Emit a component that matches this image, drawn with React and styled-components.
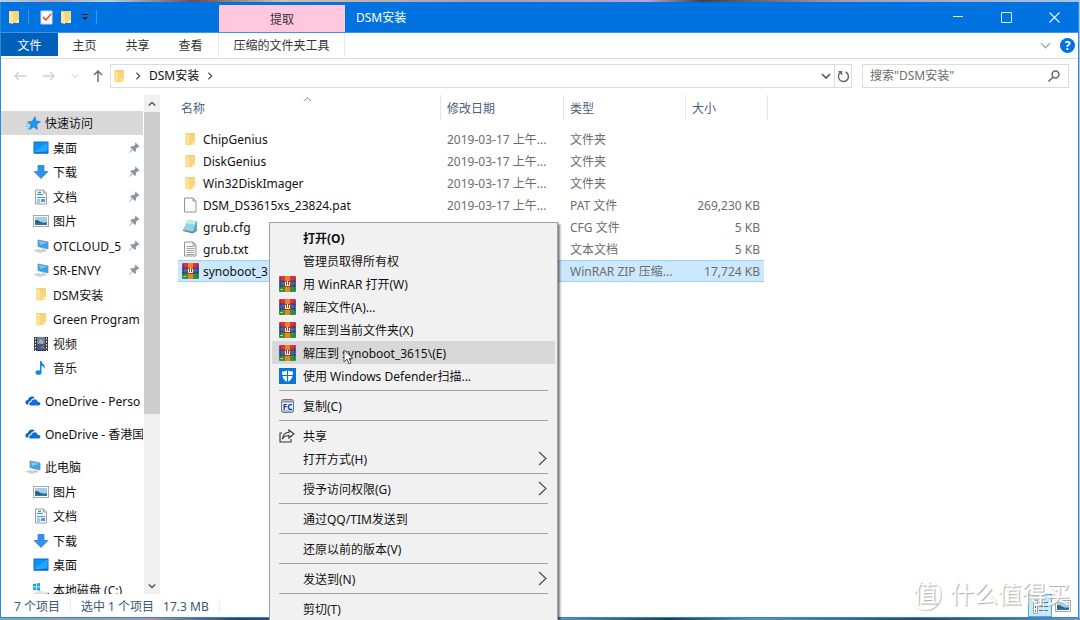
import styled, { createGlobalStyle, css } from 'styled-components';

const colors = {
    accent: '#0073e0',
    accentDark: '#005fb8',
    frame: '#2a8bd4',
    line: '#dcdcdc',
    muted: '#6d6d6d',
    heading: '#4c607a',
    selection: '#cce8ff',
    selectionBorder: '#99d1ff',
};

const GlobalStyle = createGlobalStyle`
    * {
        box-sizing: border-box;
    }

    body {
        margin: 0;
        font-family: 'Noto Sans', 'Noto Sans CJK SC', sans-serif;
        font-size: 12px;
        line-height: 20px;
        color: #111;
    }

    button, input {
        font: inherit;
        color: inherit;
        border: none;
        background: none;
        padding: 0;
        margin: 0;
    }
`;

const Desktop = styled.div`
    position: relative;
    display: flex;
    height: 100vh;
    padding: 2px 1px 2px 0;
    overflow: hidden;
    background:
        linear-gradient(90deg, #7fa3c4 0%, #a893a8 14%, #24436c 22%, #6f9cc6 50%, #1d3a5e 62%, #5f90bd 70%, #27466d 85%, #6f95b8 100%) bottom / 100% 2px no-repeat,
        linear-gradient(90deg, #b5d3e6 0%, #b5a8b4 5%, #b5d3e6 10%, #6f4a58 18%, #cfbfa8 26%, #a79cb8 45%, #b4a6d0 60%, #44404e 65%, #a79ab4 78%, #a9c4e4 100%);
`;

const Window = styled.div`
    flex: 1;
    min-width: 0;
    display: flex;
    flex-direction: column;
    border: solid ${colors.frame};
    border-width: 0 1px 1px;
    background: #fff;
`;

const TitleBar = styled.header`
    display: flex;
    height: 31px;
    flex-shrink: 0;
    background: ${colors.accent};
    border-bottom: 1px solid #3d93e4;
    color: #fff;
`;

const QuickAccess = styled.div`
    display: flex;
    align-items: center;
    gap: 6px;
    width: 218px;
    padding-left: 6px;
`;

const Divider = styled.span`
    width: 1px;
    height: 14px;
    margin-right: 5px;
    background: #3f95e8;
`;

const IconButton = styled.button`
    display: flex;
    align-items: center;
    justify-content: center;
    flex-shrink: 0;
    width: ${(props) => props.$width || 'auto'};
`;

const ContextTab = styled.div`
    width: 126px;
    margin-top: 3px;
    padding-top: 5px;
    text-align: center;
    color: #333;
    background: #ffc8df;
`;

const Title = styled.h1`
    flex: 1;
    margin: 0;
    padding: 6px 11px;
    font-size: 12px;
    line-height: 20px;
    font-weight: 400;
`;

const Ribbon = styled.nav`
    display: flex;
    align-items: flex-start;
    height: 26px;
    flex-shrink: 0;
    border-bottom: 1px solid ${colors.line};
    color: #333;
`;

const RibbonTab = styled.button`
    width: 53px;
    height: 24px;
    padding-top: 2px;

    ${(props) => props.$file && css`
        width: 57px;
        height: 23px;
        background: ${colors.accentDark};
        color: #fff;
    `}

    ${(props) => props.$context && css`
        width: 127px;
        margin-left: 1px;
        border: solid #e6e6e6;
        border-width: 0 1px;
    `}
`;

const RibbonEnd = styled.div`
    display: flex;
    align-items: center;
    gap: 9px;
    height: 24px;
    margin-left: auto;
    padding-right: 3px;
`;

const Help = styled.button`
    width: 15px;
    height: 15px;
    border-radius: 50%;
    background: ${colors.accent};
    color: #fff;
    font-weight: 700;
    line-height: 15px;
`;

const AddressRow = styled.div`
    display: flex;
    align-items: center;
    height: 36px;
    flex-shrink: 0;
    padding: 0 9px 2px 12px;
`;

const NavButtons = styled.div`
    display: flex;
    align-items: center;
    gap: 12px;
    width: 97px;
`;

const AddressBar = styled.div`
    display: flex;
    flex: 1;
    height: 24px;
    border: 1px solid ${colors.line};
`;

const Crumbs = styled.div`
    display: flex;
    align-items: center;
    flex: 1;
    gap: 7px;
    padding-left: 1px;
`;

const RefreshButton = styled(IconButton)`
    border-left: 1px solid ${colors.line};
`;

const SearchBox = styled.label`
    display: flex;
    align-items: center;
    width: 207px;
    height: 24px;
    margin-left: 10px;
    padding: 0 8px 0 7px;
    border: 1px solid ${colors.line};
`;

const SearchInput = styled.input`
    flex: 1;
    min-width: 0;
    outline: none;

    &::placeholder {
        color: ${colors.muted};
        opacity: 1;
    }
`;

const Main = styled.main`
    display: flex;
    flex: 1;
    min-height: 0;
`;

const Label = styled.span`
    display: block;
    padding-top: 2px;
`;

const Sidebar = styled.aside`
    width: 142px;
    flex-shrink: 0;
    padding-top: 16px;
    overflow: hidden;
`;

const TreeGroup = styled.ul`
    list-style: none;
    margin: 0 0 9px;
    padding: 0;
`;

const TreeItem = styled.li`
    display: flex;
    align-items: center;
    gap: 4px;
    height: 24px;
    padding-left: ${(props) => (props.$root ? '24px' : '32px')};
    padding-right: ${(props) => (props.$pinned ? '3px' : '0')};
    background: ${(props) => (props.$active ? '#d9d9d9' : 'none')};
    white-space: nowrap;

    &:nth-child(even) {
        height: 25px;
    }
`;

const TreeLabel = styled(Label)`
    flex: 1;
`;

const ScrollBar = styled.div`
    display: flex;
    flex-direction: column;
    width: 16px;
    margin-left: 1px;
    background: #f0f0f0;
`;

const ScrollButton = styled(IconButton)`
    height: 17px;
`;

const ScrollTrack = styled.div`
    flex: 1;
`;

const ScrollThumb = styled.div`
    height: 65%;
    background: #cdcdcd;
`;

const Files = styled.section`
    flex: 1;
    padding-left: 18px;
    overflow: hidden;
`;

const FileTable = styled.table`
    width: 590px;
    table-layout: fixed;
    border-collapse: separate;
    border-spacing: 0;
`;

const Column = styled.col`
    width: ${(props) => props.$width};
`;

const HeadCell = styled.th`
    position: relative;
    height: 25px;
    padding: 2px 0 0 ${(props) => (props.$first ? '3px' : '6px')};
    border-right: 1px solid #e5e5e5;
    font-weight: 400;
    text-align: left;
    color: ${colors.heading};
`;

const SortMark = styled.span`
    position: absolute;
    top: 0;
    left: calc(50% - 6px);
    display: flex;
`;

const Spacer = styled.tr`
    height: 8px;
`;

const Cell = styled.td`
    height: 22px;
    padding: 0 4px 0 6px;
    white-space: nowrap;
    text-align: ${(props) => (props.$right ? 'right' : 'left')};
    color: ${(props) => (props.$name ? 'inherit' : colors.muted)};
`;

const FileRow = styled.tr`
    ${(props) => props.$selected && css`
        ${Cell} {
            background: ${colors.selection};
            box-shadow: inset 0 1px ${colors.selectionBorder}, inset 0 -1px ${colors.selectionBorder};
        }
    `}
`;

const FileName = styled.div`
    display: flex;
    align-items: center;
    gap: 4px;
    margin-left: -2px;
`;

const StatusBar = styled.footer`
    display: flex;
    align-items: center;
    height: 23px;
    flex-shrink: 0;
    padding: 0 7px 0 13px;
    color: #3b5672;
`;

const StatusText = styled(Label)`
    margin-right: 9px;
`;

const StatusLine = styled.span`
    width: 1px;
    height: 14px;
    margin: 0 10px 0 1px;
    background: #ececec;
`;

const ViewButtons = styled.div`
    display: flex;
    align-items: center;
    gap: 3px;
    height: 23px;
    margin-left: auto;
`;

const ViewButton = styled(IconButton)`
    height: 23px;

    ${(props) => props.$active && css`
        width: 24px;
        background: #c9e8f8;
        border: 1px solid #45aede;
    `}
`;

const Menu = styled.div`
    position: absolute;
    top: 222px;
    left: 269px;
    width: 289px;
    padding: 3px 2px;
    border: 1px solid #a0a0a0;
    background: #f1f1f1;
    box-shadow: 2px 2px 2px rgba(0, 0, 0, 0.5);
`;

const MenuItem = styled.button`
    display: flex;
    align-items: center;
    width: 100%;
    height: 23px;
    padding: 0 8px 0 7px;
    text-align: left;
    font-weight: ${(props) => (props.$bold ? 700 : 400)};
    background: ${(props) => (props.$active ? '#d8d8d8' : 'none')};
`;

const MenuIcon = styled.span`
    display: flex;
    width: 24px;
`;

const MenuLabel = styled(Label)`
    flex: 1;
`;

const MenuLine = styled.hr`
    height: 1px;
    margin: 3px 7px;
    border: none;
    background: #a3a3a3;
`;

const Pointer = styled.svg`
    position: absolute;
    top: 349px;
    left: 343px;
`;

const Watermark = styled.div`
    position: absolute;
    right: 10px;
    bottom: 10px;
    display: flex;
    align-items: center;
    gap: 9px;
    font-size: 24px;
    line-height: 32px;
    color: #fff;
    text-shadow: 1px 1px 1px #aaa;
    pointer-events: none;
`;

const WatermarkBadge = styled.span`
    width: 31px;
    height: 31px;
    border-radius: 50%;
    line-height: 28px;
    text-align: center;
    box-shadow: 1px 1px 1px #c4c4c4;
`;

const Chevron = ({ dir = 'right', size = 8, color = '#555', width = 1.2 }) => {
    const paths = {
        right: 'M3 1l4 4-4 4',
        down: 'M1 3l4 4 4-4',
        up: 'M1 7l4-4 4 4',
    };
    return (
        <svg width={size} height={size} viewBox="0 0 10 10" fill="none" stroke={color} strokeWidth={width}>
            <path d={paths[dir]} />
        </svg>
    );
};

const FolderIcon = () => (
    <svg width="15" height="15" viewBox="0 0 15 15">
        <path d="M2 1h9l1 1v11H2z" fill="#f3cf73" />
        <path d="M2 1l4 2v11l-4-1z" fill="#fbe29a" />
        <path d="M6 3h4V1h2v12H6z" fill="#f8d67c" />
        <path d="M10 10h2v3h-3z" fill="#ffeec0" />
    </svg>
);

const StarIcon = () => (
    <svg width="16" height="15" viewBox="0 0 16 15">
        <path d="M10 .5l1.200 4.500 4.300.6-3.700 2.900.7 5-3.800-2.500-4.500 2.700 1.600-4.700L2.500 6l4.700-.8z" fill="#2196ee" stroke="#1478c8" strokeWidth=".5" />
        <path d="M.5 10.500h4M2 13h2.500M1 8h3" stroke="#79b9e8" strokeWidth=".9" />
    </svg>
);

const DesktopIcon = () => (
    <svg width="16" height="14" viewBox="0 0 16 14">
        <rect x="1" y="1" width="14" height="11" fill="#0a93f5" stroke="#0a6fc8" />
        <path d="M14.500 1.500v8L5 11.500H1.500v-1z" fill="#27a5ff" />
        <path d="M1 12h14" stroke="#0860ae" />
    </svg>
);

const DownloadIcon = () => (
    <svg width="16" height="16" viewBox="0 0 16 16">
        <path d="M5 1.500h6v6h4l-7 7-7-7h4z" fill="#3390ea" stroke="#2478cc" strokeWidth=".7" />
    </svg>
);

const DocumentIcon = () => (
    <svg width="16" height="16" viewBox="0 0 16 16">
        <path d="M2.500 1h8l3 3v11h-11z" fill="#f5f7f8" stroke="#9aa0a5" />
        <path d="M10.500 1v3h3" fill="none" stroke="#9aa0a5" />
        <path d="M4 5.500h6M4 8.500h8M4 11h3M4 13h3" stroke="#3aa0d8" />
        <path d="M5 3.500h3" stroke="#3c8ec0" strokeWidth="1.500" />
        <path d="M8 10h4v3H8z" fill="#4f9fca" />
    </svg>
);

const PictureIcon = () => (
    <svg width="16" height="14" viewBox="0 0 16 14">
        <rect x=".5" y="1.500" width="15" height="11" fill="#fff" stroke="#a5a9ac" />
        <rect x="2" y="3" width="12" height="8" fill="#9dd0ef" />
        <path d="M2 6.500c2-1.500 4 .500 6 1.500s4 .5 6 .5V10H2z" fill="#35606b" />
        <path d="M2 9.500h12V11H2z" fill="#2c77a8" />
    </svg>
);

const ComputerIcon = () => (
    <svg width="16" height="16" viewBox="0 0 16 16">
        <path d="M5 2l10 2v7L5 8.500z" fill="#35a6f2" stroke="#7b8c98" strokeWidth=".8" />
        <path d="M6 3l8 1.700L7 7z" fill="#7cc8fa" />
        <path d="M10 10.500v2l3 .5" stroke="#9aa5ac" fill="none" />
        <path d="M0 12.500l5-1.500 7 2-5 2z" fill="#c9d0d5" />
    </svg>
);

const VideoIcon = () => (
    <svg width="16" height="16" viewBox="0 0 16 16">
        <rect x="1" y="1" width="14" height="14" fill="#3d3d3d" />
        <rect x="4" y="1" width="8" height="7" fill="#5d83c0" />
        <rect x="4" y="8" width="8" height="6" fill="#2e58ad" />
        <path d="M5 7l3-4 2 2v3z" fill="#e0a650" />
        <path d="M7 12l3-3 2 4z" fill="#c95b3a" />
        <path d="M2.500 2v13M13.500 2v13" stroke="#fff" strokeDasharray="1.500 1.500" />
    </svg>
);

const MusicIcon = () => (
    <svg width="16" height="16" viewBox="0 0 16 16">
        <ellipse cx="5.500" cy="12.500" rx="3" ry="2.300" fill="#0a8cf0" />
        <path d="M7 1h1.500c.3 3 4.500 3.500 3 8-.5-2-1.500-3-3-3.300V12.500H7z" fill="#0a8cf0" />
    </svg>
);

const CloudIcon = () => (
    <svg width="16" height="12" viewBox="0 0 16 12">
        <path d="M1.500 9.500C-.5 8 .5 5 3 5c.4-3.500 5-5 7-2-2.500.2-3.800 1.300-4.300 3-2 .3-2.800 2-2.200 3.500z" fill="#0a62c0" />
        <path d="M6 10.500c-2.500 0-2.400-3.300.4-3.500.4-3.500 5.400-3.700 6.100-.3 3.600-.2 3.700 3.800 1 3.800z" fill="#0f6fd8" />
    </svg>
);

const DiskIcon = () => (
    <svg width="16" height="16" viewBox="0 0 16 16">
        <path d="M0 2l3-.5v3H0zM3.700 1.400l3.300-.5v3.600H3.700zM0 5.200h3v3l-3-.5zM3.700 5.200H7v3.600l-3.300-.5z" fill="#18a4e0" />
        <path d="M2 11l5-2.500 9 2-5 3z" fill="#e4e7e9" />
        <path d="M2 11l9 2.500V16l-9-2z" fill="#a5abb0" />
        <path d="M11 13.500l5-3V13l-5 3z" fill="#6d747a" />
    </svg>
);

const PinIcon = () => (
    <svg width="11" height="12" viewBox="0 0 11 12" fill="#8796a2">
        <path d="M6.500.5l4 4-1 .8-.7-.3-2 2 .2 2-1 1L3.500 7.500.8 11l-.4-.4L3 7 1.300 5.200l1-1 2.200.1 2-2-.5-.9z" />
    </svg>
);

const PageIcon = ({ lines }) => (
    <svg width="15" height="16" viewBox="0 0 15 16">
        <path d="M1.500 1h8.500l3 3v11H1.500z" fill="#fbfbfb" stroke="#949494" />
        <path d="M10 1v3h3" fill="none" stroke="#949494" />
        {lines && <path d="M3.500 5.500h8M3.500 7.500h8M3.500 9.500h8M3.500 11.500h8M3.500 13.500h8" stroke="#999" strokeWidth=".9" />}
    </svg>
);

const CfgIcon = () => (
    <svg width="15" height="16" viewBox="0 0 15 16">
        <path d="M5 1l9 1.500v9L10 14 0 11.500z" fill="#5aaccb" />
        <path d="M5 1l8 1.500L10 12 0 11z" fill="#91d2e5" />
        <path d="M5 1l8 1.500-1 3-8.500-1z" fill="#c7ebf3" />
        <path d="M0 11.500l10 2.500 4-3" stroke="#777" fill="none" />
    </svg>
);

const RarIcon = () => (
    <svg width="17" height="16" viewBox="0 0 17 16">
        <rect y="0" width="17" height="5" rx="1" fill="#d03848" />
        <rect y="5" width="17" height="5" fill="#4460c8" />
        <rect y="10" width="17" height="6" rx="1" fill="#2e9440" />
        <path d="M0 5h17M0 10h17" stroke="#33242c" strokeOpacity=".7" />
        <path d="M1.500 1v14M15.500 1v14" stroke="#201c30" strokeOpacity=".3" />
        <rect x="6" width="5" height="16" fill="#f0802c" />
        <rect x="5" y="5" width="7" height="6" fill="#8c4a2a" />
        <path d="M6.500 6v3.500h4V6M8.500 5v4" stroke="#fff3d8" fill="none" />
        <path d="M1 13.500h3" stroke="#d9c944" />
    </svg>
);

const DefenderIcon = () => (
    <svg width="17" height="16" viewBox="0 0 17 16">
        <rect width="17" height="16" fill="#0a74da" />
        <path d="M8.500 2C7 3 5 3.500 3 3.500c0 5 1 8.500 5.500 10.500C13 12 14 8.500 14 3.500 12 3.500 10 3 8.500 2z" fill="#fff" />
        <path d="M8.500 2v12M3 7.500h11" stroke="#0a74da" strokeWidth="1.200" />
    </svg>
);

const CopyIcon = () => (
    <svg width="17" height="16" viewBox="0 0 17 16">
        <rect x="2.500" y="1.500" width="12" height="13" rx="2" fill="#b4becb" stroke="#6b7480" />
        <path d="M4 3.500h9" stroke="#8893a0" />
        <rect x="3" y="5" width="11" height="7" fill="#e9eefa" />
        <text x="8.500" y="11.500" textAnchor="middle" fontSize="8" fontWeight="700" fill="#0b3a9c">FC</text>
    </svg>
);

const ShareIcon = () => (
    <svg width="17" height="16" viewBox="0 0 17 16" fill="none" stroke="#333" strokeWidth="1.100">
        <path d="M3 5H1v9h11v-3" />
        <path d="M10 2l5 4-5 4V7.500C7 7.500 5 8.500 3.500 11 4 7 6 4.500 10 4.300z" />
    </svg>
);

const ArrowIcon = ({ d, color }) => (
    <svg width="14" height="14" viewBox="0 0 14 14" fill="none" stroke={color} strokeWidth="1.400">
        <path d={d} />
    </svg>
);

const DetailsIcon = () => (
    <svg width="18" height="18" viewBox="0 0 18 18" fill="none" stroke="#5d6f7a">
        <path d="M2.500 3.500h4v13h-4z" fill="#fff" stroke="#9aa8b0" />
        <path d="M4 6h1M4 10h1M4 14h1" stroke="#b0563a" strokeWidth="2" />
        <path d="M8 5.500h4M13 5.500h4M8 9.500h4M13 9.500h4M8 13.500h4M13 13.500h4" />
    </svg>
);

const tree = [
    [
        { label: '快速访问', icon: <StarIcon />, root: true, active: true },
        { label: '桌面', icon: <DesktopIcon />, pinned: true },
        { label: '下载', icon: <DownloadIcon />, pinned: true },
        { label: '文档', icon: <DocumentIcon />, pinned: true },
        { label: '图片', icon: <PictureIcon />, pinned: true },
        { label: 'OTCLOUD_5', icon: <ComputerIcon />, pinned: true },
        { label: 'SR-ENVY', icon: <ComputerIcon />, pinned: true },
        { label: 'DSM安装', icon: <FolderIcon /> },
        { label: 'Green Program', icon: <FolderIcon /> },
        { label: '视频', icon: <VideoIcon /> },
        { label: '音乐', icon: <MusicIcon /> },
    ],
    [{ label: 'OneDrive - Perso', icon: <CloudIcon />, root: true }],
    [{ label: 'OneDrive - 香港国', icon: <CloudIcon />, root: true }],
    [
        { label: '此电脑', icon: <ComputerIcon />, root: true },
        { label: '图片', icon: <PictureIcon /> },
        { label: '文档', icon: <DocumentIcon /> },
        { label: '下载', icon: <DownloadIcon /> },
        { label: '桌面', icon: <DesktopIcon /> },
        { label: '本地磁盘 (C:)', icon: <DiskIcon /> },
    ],
];

const files = [
    { name: 'ChipGenius', icon: <FolderIcon />, date: '2019-03-17 上午...', type: '文件夹' },
    { name: 'DiskGenius', icon: <FolderIcon />, date: '2019-03-17 上午...', type: '文件夹' },
    { name: 'Win32DiskImager', icon: <FolderIcon />, date: '2019-03-17 上午...', type: '文件夹' },
    { name: 'DSM_DS3615xs_23824.pat', icon: <PageIcon />, date: '2019-03-17 上午...', type: 'PAT 文件', size: '269,230 KB' },
    { name: 'grub.cfg', icon: <CfgIcon />, type: 'CFG 文件', size: '5 KB' },
    { name: 'grub.txt', icon: <PageIcon lines />, type: '文本文档', size: '5 KB' },
    { name: 'synoboot_3', icon: <RarIcon />, type: 'WinRAR ZIP 压缩...', size: '17,724 KB', selected: true },
];

const menu = [
    [
        { label: '打开(O)', bold: true },
        { label: '管理员取得所有权' },
        { label: '用 WinRAR 打开(W)', icon: <RarIcon /> },
        { label: '解压文件(A)...', icon: <RarIcon /> },
        { label: '解压到当前文件夹(X)', icon: <RarIcon /> },
        { label: '解压到 synoboot_3615\\(E)', icon: <RarIcon />, active: true },
        { label: '使用 Windows Defender扫描...', icon: <DefenderIcon /> },
    ],
    [{ label: '复制(C)', icon: <CopyIcon /> }],
    [
        { label: '共享', icon: <ShareIcon /> },
        { label: '打开方式(H)', sub: true },
    ],
    [{ label: '授予访问权限(G)', sub: true }],
    [{ label: '通过QQ/TIM发送到' }],
    [{ label: '还原以前的版本(V)' }],
    [{ label: '发送到(N)', sub: true }],
    [{ label: '剪切(T)' }],
];

const WindowTop = () => (
    <>
        <TitleBar>
            <QuickAccess>
                <FolderIcon />
                <Divider />
                <IconButton aria-label="属性">
                    <svg width="13" height="15" viewBox="0 0 13 15">
                        <path d="M1 1h11v13H1z" fill="#fff" stroke="#c9d6e4" />
                        <path d="M3 7l3 3 5-6" fill="none" stroke="#e2622c" strokeWidth="1.800" />
                    </svg>
                </IconButton>
                <IconButton aria-label="新建文件夹"><FolderIcon /></IconButton>
                <IconButton $width="10px" aria-label="自定义快速访问工具栏">
                    <svg width="8" height="8" viewBox="0 0 8 8" fill="#0b2036">
                        <path d="M1 1h6v1H1zM1 4h6L4 7z" />
                    </svg>
                </IconButton>
                <Divider />
            </QuickAccess>
            <ContextTab>提取</ContextTab>
            <Title>DSM安装</Title>
            <IconButton $width="48px" aria-label="最小化">
                <svg width="10" height="10" stroke="#d9ecff"><path d="M0 4.500h10" /></svg>
            </IconButton>
            <IconButton $width="48px" aria-label="最大化">
                <svg width="11" height="11" stroke="#d9ecff" fill="none"><path d="M.5.5h10v10H.5z" /></svg>
            </IconButton>
            <IconButton $width="48px" aria-label="关闭">
                <svg width="11" height="11" stroke="#e6f2ff" strokeWidth="1.200"><path d="M.5.5l10 10M10.500.5l-10 10" /></svg>
            </IconButton>
        </TitleBar>
        <Ribbon>
            <RibbonTab $file>文件</RibbonTab>
            <RibbonTab>主页</RibbonTab>
            <RibbonTab>共享</RibbonTab>
            <RibbonTab>查看</RibbonTab>
            <RibbonTab $context>压缩的文件夹工具</RibbonTab>
            <RibbonEnd>
                <IconButton aria-label="展开功能区"><Chevron dir="down" size={11} color="#aaa" /></IconButton>
                <Help aria-label="帮助">?</Help>
            </RibbonEnd>
        </Ribbon>
        <AddressRow>
            <NavButtons>
                <IconButton aria-label="后退"><ArrowIcon d="M13 7H2M6 3L2 7l4 4" color="#d0d0d0" /></IconButton>
                <IconButton $width="20px" aria-label="前进"><ArrowIcon d="M1 7h11M8 3l4 4-4 4" color="#d0d0d0" /></IconButton>
                <IconButton aria-label="最近位置"><Chevron dir="down" color="#c4c4c4" /></IconButton>
                <IconButton aria-label="向上"><ArrowIcon d="M7 13V2M3 6l4-4 4 4" color="#666" /></IconButton>
            </NavButtons>
            <AddressBar>
                <Crumbs>
                    <FolderIcon />
                    <Chevron width={1.6} />
                    <span>DSM安装</span>
                    <Chevron width={1.6} />
                </Crumbs>
                <IconButton $width="16px" aria-label="以前的位置"><Chevron dir="down" size={10} width={1.6} /></IconButton>
                <RefreshButton $width="17px" aria-label="刷新">
                    <svg width="13" height="13" viewBox="0 0 13 13" fill="none" stroke="#666" strokeWidth="1.400">
                        <path d="M8.500 2a5 5 0 1 1-4.500.2M4.500 5V1.800H1.500" />
                    </svg>
                </RefreshButton>
            </AddressBar>
            <SearchBox>
                <SearchInput type="text" aria-label="搜索" placeholder={'搜索"DSM安装"'} />
                <svg width="12" height="12" viewBox="0 0 12 12" fill="none" stroke="#666" strokeWidth="1.500">
                    <circle cx="7.500" cy="4.500" r="3.400" />
                    <path d="M5 7l-4.500 4.500" />
                </svg>
            </SearchBox>
        </AddressRow>
    </>
);

const NavigationTree = () => (
    <>
        <Sidebar>
            {tree.map((group, i) => (
                <TreeGroup key={i}>
                    {group.map((item) => (
                        <TreeItem key={item.label} $root={item.root} $active={item.active} $pinned={item.pinned}>
                            <IconButton as="span" $width="16px">{item.icon}</IconButton>
                            <TreeLabel>{item.label}</TreeLabel>
                            {item.pinned && <PinIcon />}
                        </TreeItem>
                    ))}
                </TreeGroup>
            ))}
        </Sidebar>
        <ScrollBar>
            <ScrollButton $width="16px" aria-label="向上滚动"><Chevron dir="up" width={1.7} /></ScrollButton>
            <ScrollTrack>
                <ScrollThumb />
            </ScrollTrack>
            <ScrollButton $width="16px" aria-label="向下滚动"><Chevron dir="down" width={1.7} /></ScrollButton>
        </ScrollBar>
    </>
);

const FileList = () => (
    <Files>
        <FileTable>
            <colgroup>
                <Column $width="263px" />
                <Column $width="123px" />
                <Column $width="122px" />
                <Column $width="78px" />
                <Column $width="4px" />
            </colgroup>
            <thead>
                <tr>
                    <HeadCell $first>
                        名称
                        <SortMark><Chevron dir="up" size={9} color="#777" width={1} /></SortMark>
                    </HeadCell>
                    <HeadCell>修改日期</HeadCell>
                    <HeadCell>类型</HeadCell>
                    <HeadCell colSpan={2}>大小</HeadCell>
                </tr>
            </thead>
            <tbody>
                <Spacer />
                {files.map((file) => (
                    <FileRow key={file.name} $selected={file.selected}>
                        <Cell $name>
                            <FileName>
                                <IconButton as="span" $width="17px">{file.icon}</IconButton>
                                <Label>{file.name}</Label>
                            </FileName>
                        </Cell>
                        <Cell><Label>{file.date}</Label></Cell>
                        <Cell><Label>{file.type}</Label></Cell>
                        <Cell $right><Label>{file.size}</Label></Cell>
                    </FileRow>
                ))}
            </tbody>
        </FileTable>
    </Files>
);

const ContextMenu = () => (
    <Menu>
        {menu.map((group, i) => (
            <div key={i}>
                {i > 0 && <MenuLine />}
                {group.map((item) => (
                    <MenuItem key={item.label} $bold={item.bold} $active={item.active}>
                        <MenuIcon>{item.icon}</MenuIcon>
                        <MenuLabel>{item.label}</MenuLabel>
                        {item.sub && (
                            <svg width="9" height="15" viewBox="0 0 9 15" fill="none" stroke="#444" strokeWidth="1.100">
                                <path d="M1 1l7 6.500L1 14" />
                            </svg>
                        )}
                    </MenuItem>
                ))}
            </div>
        ))}
    </Menu>
);

const App = () => {
    return (
        <Desktop>
            <GlobalStyle />
            <Window>
                <WindowTop />
                <Main>
                    <NavigationTree />
                    <FileList />
                </Main>
                <StatusBar>
                    <StatusText>7 个项目</StatusText>
                    <StatusLine />
                    <StatusText>选中 1 个项目</StatusText>
                    <StatusText>17.3 MB</StatusText>
                    <StatusLine />
                    <ViewButtons>
                        <ViewButton $active aria-label="详细信息"><DetailsIcon /></ViewButton>
                        <ViewButton aria-label="大图标"><PictureIcon /></ViewButton>
                    </ViewButtons>
                </StatusBar>
            </Window>
            <ContextMenu />
            <Pointer width="12" height="17" viewBox="0 0 12 17">
                <path d="M1 1v12l3-3 2 5 2-1-2-4.500h4z" fill="#fff" stroke="#555" />
            </Pointer>
            <Watermark>
                <WatermarkBadge>值</WatermarkBadge>
                什么值得买
            </Watermark>
        </Desktop>
    );
};

export default App;
